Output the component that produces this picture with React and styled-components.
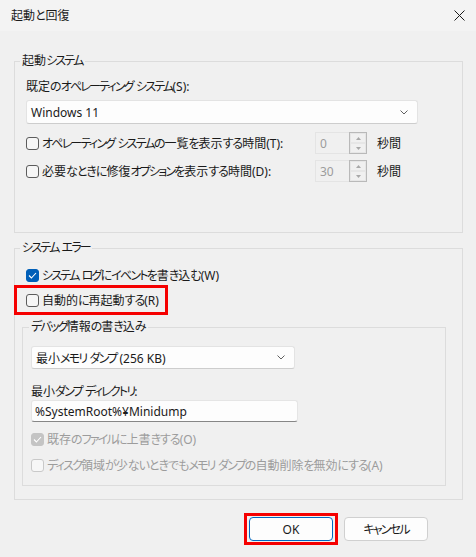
import React from 'react';
import styled, { createGlobalStyle } from 'styled-components';

const GlobalStyle = createGlobalStyle`
  body {
    margin: 0;
    background: #f0f0f0;
    font-family: 'Noto Sans', 'Noto Sans CJK JP', sans-serif;
    font-size: 12px;
    color: #1a1a1a;
    font-feature-settings: 'palt';
  }
`;

// Yu Gothic UI draws kana narrower than Noto, so kana runs get tighter tracking
const Kata = styled.span`
  letter-spacing: -1.8px;
`;

const Hira = styled.span`
  letter-spacing: -1px;
`;

const T = ({ children }) =>
  String(children)
    .split(/([\u30A0-\u30FF]+|[\u3040-\u309F]+)/)
    .filter(Boolean)
    .map((part, i) => {
      if (/^[\u30A0-\u30FF]+$/.test(part)) return <Kata key={i}>{part}</Kata>;
      if (/^[\u3040-\u309F]+$/.test(part)) return <Hira key={i}>{part}</Hira>;
      return <React.Fragment key={i}>{part}</React.Fragment>;
    });

const Window = styled.div`
  width: 476px;
  height: 557px;
  background: #f0f0f0;
  display: flex;
  flex-direction: column;
  overflow: hidden;
`;

const TitleBar = styled.div`
  height: 31px;
  flex-shrink: 0;
  background: #f3f3f3;
  display: flex;
  align-items: center;
  justify-content: space-between;
  padding: 0 11px;
  box-sizing: border-box;
`;

const Title = styled.span`
  font-size: 12px;
  line-height: 16px;
`;

const CloseIcon = styled.svg`
  width: 11px;
  height: 11px;
`;

const Body = styled.div`
  padding: 22px 13px 0 14px;
  display: flex;
  flex-direction: column;
`;

const Group = styled.fieldset`
  margin: ${p => p.$margin || '0'};
  padding: ${p => p.$padding};
  width: ${p => p.$width}px;
  box-sizing: border-box;
  border: 1px solid #dcdcdc;
  min-width: 0;
  display: flex;
  flex-direction: column;
`;

const Legend = styled.legend`
  padding: 0 2px;
  margin-left: ${p => p.$offset}px;
  line-height: 16px;
  font-size: 12px;
`;

const Label = styled.div`
  line-height: 16px;
  margin-top: ${p => p.$top || 0}px;
`;

const Combo = styled.div`
  width: ${p => p.$width}px;
  height: ${p => p.$height}px;
  margin-top: ${p => p.$top || 0}px;
  box-sizing: border-box;
  background: #fdfdfd;
  border: 1px solid #e3e3e3;
  border-bottom-color: #cdcdcd;
  border-radius: 3px;
  display: flex;
  align-items: center;
  justify-content: space-between;
  padding: 0 9px 0 4px;
`;

const Chevron = () => (
  <svg width="8" height="5" viewBox="0 0 8 5">
    <polyline points="0.5,0.5 4,4 7.5,0.5" fill="none" stroke="#606060" strokeWidth="1" />
  </svg>
);

const TextField = styled.div`
  width: ${p => p.$width}px;
  height: 22px;
  box-sizing: border-box;
  background: #fdfdfd;
  border: 1px solid #e5e5e5;
  border-bottom: 1px solid #868686;
  border-radius: 3px;
  display: flex;
  align-items: center;
  padding: 0 3px;
`;

const CheckRow = styled.label`
  display: flex;
  align-items: center;
  gap: 3px;
  height: 20px;
  white-space: nowrap;
  margin-top: ${p => p.$top || 0}px;
  color: ${p => (p.$disabled ? '#9c9c9c' : '#1a1a1a')};
`;

const Box = styled.span`
  width: 13px;
  height: 13px;
  box-sizing: border-box;
  border-radius: 3px;
  flex-shrink: 0;
  display: flex;
  align-items: center;
  justify-content: center;
  border: 1px solid ${p => (p.$checked ? (p.$disabled ? '#c4c4c4' : '#005fb8') : p.$disabled ? '#c9c9c9' : '#5c5c5c')};
  background: ${p => (p.$checked ? (p.$disabled ? '#c4c4c4' : '#005fb8') : p.$disabled ? '#f7f7f7' : '#f6f6f6')};
`;

const Checkbox = ({ checked, disabled }) => (
  <Box $checked={checked} $disabled={disabled}>
    {checked && (
      <svg width="9" height="7" viewBox="0 0 9 7">
        <polyline points="1,3.5 3.4,6 8,1" fill="none" stroke="#fff" strokeWidth="1.1" />
      </svg>
    )}
  </Box>
);

const Highlight = styled.div`
  width: 154px;
  height: 30px;
  box-sizing: border-box;
  border: 3px solid #f50000;
  margin-left: -12px;
  padding-left: 9px;
  display: flex;
  align-items: center;
`;

const TimeRow = styled.div`
  display: grid;
  grid-template-columns: 289px 52px auto;
  align-items: center;
  height: 22px;
  margin-top: ${p => p.$top}px;
`;

const Unit = styled.span`
  margin-left: 10px;
`;

const Spin = styled.div`
  display: flex;
  height: 22px;
`;

const SpinInput = styled.div`
  width: 34px;
  box-sizing: border-box;
  border: 1px solid #e4e4e4;
  border-right: none;
  color: #9c9c9c;
  display: flex;
  align-items: center;
  padding-left: 4px;
`;

const SpinButtons = styled.div`
  width: 18px;
  box-sizing: border-box;
  border: 1px solid #b9b9b9;
  display: flex;
  flex-direction: column;
`;

const SpinButton = styled.div`
  flex: 1;
  border: 1px solid #e6e6e6;
  display: flex;
  align-items: center;
  justify-content: center;
`;

const Arrow = ({ down }) => (
  <svg width="5" height="3" viewBox="0 0 5 3">
    <polygon points={down ? '0,0 5,0 2.5,3' : '0,3 5,3 2.5,0'} fill="#a8a8a8" />
  </svg>
);

const SpinBox = ({ value }) => (
  <Spin>
    <SpinInput>{value}</SpinInput>
    <SpinButtons>
      <SpinButton><Arrow /></SpinButton>
      <SpinButton><Arrow down /></SpinButton>
    </SpinButtons>
  </Spin>
);

const Footer = styled.div`
  display: flex;
  justify-content: flex-end;
  align-items: center;
  gap: 6px;
  padding-right: 48px;
  margin-top: 13px;
`;

const Focus = styled.div`
  border: 3px solid #f50000;
  padding: 1px 2px;
  display: flex;
`;

const Button = styled.button`
  width: 84px;
  height: 24px;
  box-sizing: border-box;
  background: #fdfdfd;
  border: 1px solid ${p => (p.$primary ? '#0067c0' : '#d0d0d0')};
  border-radius: 4px;
  font-family: inherit;
  font-size: 12px;
  color: #1a1a1a;
  padding: 0;
  font-feature-settings: 'palt';
`;

export default function App() {
  return (
    <Window>
      <GlobalStyle />
      <TitleBar>
        <Title>起動と回復</Title>
        <CloseIcon viewBox="0 0 11 11">
          <path d="M0.5 0.5 L10.5 10.5 M10.5 0.5 L0.5 10.5" stroke="#1a1a1a" strokeWidth="1" />
        </CloseIcon>
      </TitleBar>
      <Body>
        <Group $padding="10px 11px 50px" $width={449}>
          <Legend $offset={-6}><T>起動システム</T></Legend>
          <Label><T>既定のオペレーティング システム(S):</T></Label>
          <Combo $width={392} $height={24} $top={5}>
            <span>Windows 11</span>
            <Chevron />
          </Combo>
          <TimeRow $top={8}>
            <CheckRow>
              <Checkbox />
              <span><T>オペレーティング システムの一覧を表示する時間(T):</T></span>
            </CheckRow>
            <SpinBox value="0" />
            <Unit>秒間</Unit>
          </TimeRow>
          <TimeRow $top={6}>
            <CheckRow>
              <Checkbox />
              <span><T>必要なときに修復オプションを表示する時間(D):</T></span>
            </CheckRow>
            <SpinBox value="30" />
            <Unit>秒間</Unit>
          </TimeRow>
        </Group>

        <Group $padding="9px 11px 13px" $width={449} $margin="7px 0 0">
          <Legend $offset={-6}><T>システム エラー</T></Legend>
          <CheckRow>
            <Checkbox checked />
            <span><T>システム ログにイベントを書き込む(W)</T></span>
          </CheckRow>
          <Highlight>
            <CheckRow>
              <Checkbox />
              <span><T>自動的に再起動する(R)</T></span>
            </CheckRow>
          </Highlight>
          <Group $padding="11px 8px 10px" $width={424} $margin="4px 0 0 -4px">
            <Legend $offset={-2}><T>デバッグ情報の書き込み</T></Legend>
            <Combo $width={264} $height={23}>
              <span><T>最小メモリ ダンプ (256 KB)</T></span>
              <Chevron />
            </Combo>
            <Label $top={15}><T>最小ダンプ ディレクトリ:</T></Label>
            <TextField $width={267}>%SystemRoot%¥Minidump</TextField>
            <CheckRow $top={7} $disabled>
              <Checkbox checked disabled />
              <span><T>既存のファイルに上書きする(O)</T></span>
            </CheckRow>
            <CheckRow $top={6} $disabled>
              <Checkbox disabled />
              <span><T>ディスク領域が少ないときでもメモリ ダンプの自動削除を無効にする(A)</T></span>
            </CheckRow>
          </Group>
        </Group>
      </Body>
      <Footer>
        <Focus>
          <Button $primary>OK</Button>
        </Focus>
        <Button><T>キャンセル</T></Button>
      </Footer>
    </Window>
  );
}
